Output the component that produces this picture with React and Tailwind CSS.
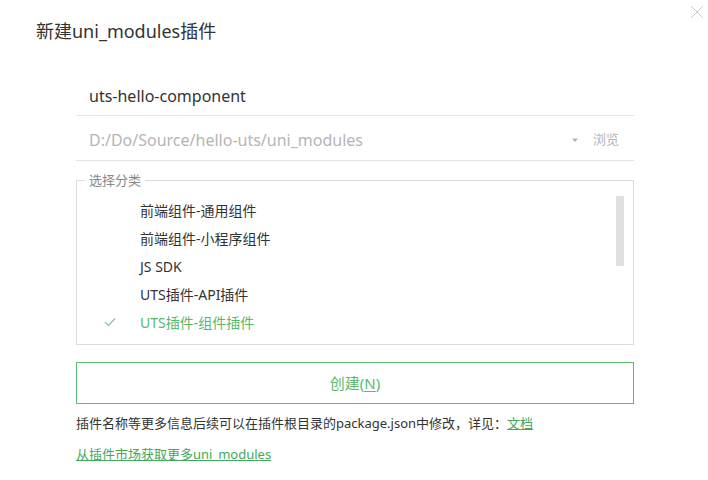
import React from "react";

const font = { fontFamily: '"Noto Sans", "Noto Sans CJK SC", sans-serif' };

export default function App() {
  const items = [
    "前端组件-通用组件",
    "前端组件-小程序组件",
    "JS SDK",
    "UTS插件-API插件",
    "UTS插件-组件插件",
  ];
  return (
    <div className="w-[708px] h-[480px] bg-white relative overflow-hidden" style={font}>
      <svg className="absolute left-[690px] top-[5px]" width="14" height="14" viewBox="0 0 14 14">
        <path d="M1 1L13 13M13 1L1 13" stroke="#c8c8c8" strokeWidth="1" />
      </svg>
      <div className="pl-[36px] pt-[18px] text-[18px] leading-[26px] text-[#333]">新建uni_modules插件</div>
      <div className="ml-[76px] mr-[74px] mt-[34px] flex flex-col">
        <div className="h-[38px] border-b border-[#e3e3e3] flex items-center pl-[13px] text-[16px] text-[#333] pb-[2px]">
          uts-hello-component
        </div>
        <div className="h-[45px] border-b border-[#e3e3e3] flex items-center pl-[13px] pt-[4px] text-[16px] text-[#b5b5b5]">
          <span className="flex-1">D:/Do/Source/hello-uts/uni_modules</span>
          <svg width="8" height="5" viewBox="0 0 8 5" className="mr-[14px]">
            <path d="M1 0.5L7 0.5L4 4Z" fill="#b0b0b0" />
          </svg>
          <span className="text-[13px] text-[#b5b5b5] mr-[15px]">浏览</span>
        </div>
        <fieldset className="mt-[12px] border border-[#dcdcdc] h-[172px] px-0 pb-0 relative">
          <legend className="ml-[8px] px-[4px] text-[13px] leading-[14px] text-[#888]">选择分类</legend>
          <div className="flex flex-col pt-[9px]">
            {items.map((t, i) => {
              const sel = i === 4;
              return (
                <div key={t} className="h-[28px] flex items-center">
                  <div className="w-[63px] flex justify-center pl-[2px]">
                    {sel && (
                      <svg width="12" height="10" viewBox="0 0 12 10">
                        <path d="M1 5L4.5 8.5L11 1.5" fill="none" stroke="#8fbf98" strokeWidth="1.2" />
                      </svg>
                    )}
                  </div>
                  <span className={`text-[14px] ${sel ? "text-[#55b96a]" : "text-[#333]"}`}>{t}</span>
                </div>
              );
            })}
          </div>
          <div className="absolute right-[9px] top-[9px] w-[8px] h-[70px] bg-[#e0e0e0]" />
        </fieldset>
        <div className="mt-[17px] h-[42px] border border-[#5fba73] flex items-center justify-center text-[15px] text-[#5bb86e]">
          创建(<span className="underline underline-offset-2">N</span>)
        </div>
        <div className="mt-[9px] text-[13px] leading-[20px] text-[#333]">
          插件名称等更多信息后续可以在插件根目录的package.json中修改，详见：
          <span className="text-[#42a85a] underline">文档</span>
        </div>
        <div className="mt-[11px] text-[13px] leading-[20px] text-[#42a85a] underline">从插件市场获取更多uni_modules</div>
      </div>
    </div>
  );
}
